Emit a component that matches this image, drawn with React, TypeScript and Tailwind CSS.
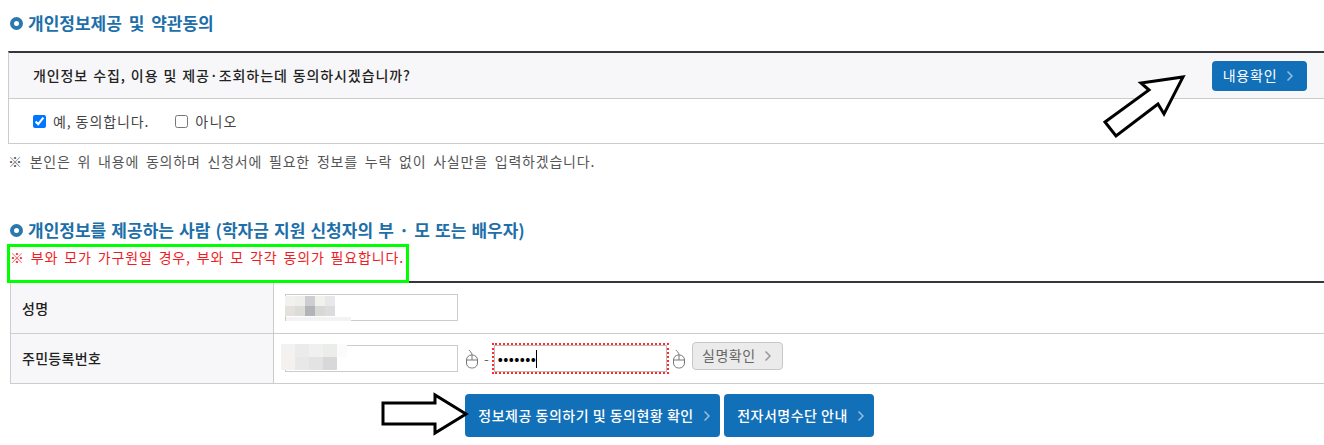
import { ChevronRight } from 'lucide-react';

const font = { fontFamily: '"Noto Sans CJK KR", "Liberation Sans", sans-serif' };

function Heading({ children, className }: { children: React.ReactNode; className: string }) {
  return (
    <h3 className={`flex items-center text-[17px] leading-[20px] font-bold text-[#1d6fa9] ${className}`}>
      <span className="mr-[5px] h-[13px] w-[13px] shrink-0 rounded-full border-4 border-[#2a78ae] bg-white" />
      {children}
    </h3>
  );
}

function BlueButton({ label, className }: { label: string; className: string }) {
  return (
    <button className={`flex items-center justify-center gap-[5px] rounded-[4px] bg-[#1170b8] text-[14px] tracking-[0.5px] text-white ${className}`}>
      {label}
      <ChevronRight size={16} strokeWidth={2.5} className="text-[#8fbde0]" />
    </button>
  );
}

function MouseIcon() {
  return (
    <svg width="14" height="20" viewBox="0 0 14 20" fill="none" stroke="#777" strokeWidth="1" className="shrink-0">
      <path d="M7 6 C7 3 5 3 4 1" />
      <rect x="1.5" y="6" width="11" height="13" rx="5" fill="#fff" />
      <path d="M1.5 11 H12.5 M7 6 V11" />
    </svg>
  );
}

// mosaic used where the personal data was blurred out in the picture
function Mosaic({ cells, cols, size, className }: { cells: string[]; cols: string; size: string; className: string }) {
  return (
    <div className={`absolute grid ${cols} ${className}`}>
      {cells.map((c, i) => (
        <div key={i} className={size} style={{ backgroundColor: c }} />
      ))}
    </div>
  );
}

export default function App() {
  return (
    <div className="relative h-[445px] w-[1324px] overflow-hidden bg-white text-[14px] text-[#444]" style={font}>
      <div className="pl-[8px]">
        <Heading className="pt-[13px] pl-[2px] [word-spacing:3px]">개인정보제공 및 약관동의</Heading>

        <div className="mt-[18px] border-t-2 border-l border-b border-t-[#35373c] border-l-[#ccc] border-b-[#ccc]">
          <div className="flex h-[46px] items-center justify-between border-b border-[#ccc] bg-[#f7f7f9] pr-[17px] pl-[24px]">
            <span className="text-[14px] font-medium tracking-[0.9px] text-[#222] [word-spacing:1px]">개인정보 수집, 이용 및 제공·조회하는데 동의하시겠습니까?</span>
            <BlueButton label="내용확인" className="h-[30px] w-[95px] pl-[2px] tracking-[0.8px]" />
          </div>
          <div className="flex h-[44px] items-center pl-[24px] tracking-[0.9px]">
            <label className="flex items-center">
              <input type="checkbox" defaultChecked className="mr-[7px] h-[13px] w-[13px] accent-[#0075ff]" />
              예, 동의합니다.
            </label>
            <label className="ml-[26px] flex items-center tracking-[1.2px]">
              <input type="checkbox" className="mr-[7px] h-[13px] w-[13px]" />
              아니오
            </label>
          </div>
        </div>

        <p className="mt-[8px] text-[14px] leading-[18px] tracking-[0.8px] text-[#555] [word-spacing:2.9px]">※ 본인은 위 내용에 동의하며 신청서에 필요한 정보를 누락 없이 사실만을 입력하겠습니다.</p>

        <Heading className="mt-[50px] pl-[2px] [word-spacing:1.3px]">개인정보를 제공하는 사람 (학자금 지원 신청자의 부 · 모 또는 배우자)</Heading>
        <p className="mt-[8px] pl-[2px] text-[14px] leading-[18px] tracking-[0.85px] text-[#f01c24] [word-spacing:2px]">※ 부와 모가 가구원일 경우, 부와 모 각각 동의가 필요합니다.</p>
      </div>

      <div className="mt-[15px] ml-[10px] border-t-2 border-t-[#35373c] border-l border-l-[#ccc]">
        <div className="flex h-[51px] border-b border-[#ccc]">
          <div className="flex w-[263px] items-center border-r border-[#ccc] bg-[#f7f7f9] pl-[11px] font-medium tracking-[0.3px] text-[#222]">성명</div>
          <div className="flex items-center pl-[11px]">
            <div className="mb-[2px] h-[27px] w-[173px] border border-[#ccc] bg-white" />
          </div>
        </div>
        <div className="flex h-[50px] border-b border-[#ccc]">
          <div className="flex w-[263px] items-center border-r border-[#ccc] bg-[#f7f7f9] pl-[11px] font-medium tracking-[0.3px] text-[#222]">주민등록번호</div>
          <div className="flex items-center pl-[11px]">
            <div className="h-[27px] w-[173px] border border-[#ccc] bg-white" />
            <span className="ml-[7px]"><MouseIcon /></span>
            <span className="mx-[5px] text-[#666]">-</span>
            <div className="flex h-[27px] w-[173px] items-center border border-[#bbb] pl-[3px] text-[#000] outline-2 outline-offset-0 outline-dotted outline-[#ff2a2a]">
              <span className="text-[15px] tracking-[0.4px]">•••••••</span>
              <span className="h-[18px] w-px bg-black" />
            </div>
            <span className="ml-[5px]"><MouseIcon /></span>
            <button className="mb-[6px] ml-[6px] flex h-[28px] w-[91px] items-center justify-center gap-[4px] rounded-[4px] border border-[#c8c8c8] bg-[#ebebeb] pl-[3px] text-[14px] tracking-[0.5px] text-[#666]">
              실명확인
              <ChevronRight size={16} strokeWidth={2.5} className="text-[#999]" />
            </button>
          </div>
        </div>
      </div>

      <div className="mt-[10px] flex gap-[4px] pl-[465px]">
        <BlueButton label="정보제공 동의하기 및 동의현황 확인" className="h-[43px] w-[255px] pl-[8px] font-medium" />
        <BlueButton label="전자서명수단 안내" className="h-[43px] w-[150px] pl-[8px] font-medium" />
      </div>

      {/* annotations drawn over the screenshot */}
      <div className="absolute top-[244px] left-[7px] h-[39px] w-[402px] border-[3px] border-[#00ff00]" />

      <svg className="absolute top-[70px] left-[1100px]" width="90" height="70" viewBox="0 0 90 70" fill="#fff" stroke="#000" strokeWidth="3">
        <path d="M5 52 L49 20 L41 13 L83 7 L64 44 L58 34 L16 66 Z" />
      </svg>
      <svg className="absolute top-[392px] left-[380px]" width="90" height="46" viewBox="0 0 90 46" fill="#fff" stroke="#000" strokeWidth="3">
        <path d="M3 11 H55 V3 L86 22 L55 41 V32 H3 Z" />
      </svg>

      <Mosaic
        className="top-[296px] left-[285px]"
        cols="grid-cols-[10px_10px_10px_10px_10px]"
        size="h-[10px]"
        cells={['#f2f1f0', '#eeefea', '#cdced2', '#f1f1ee', '#e8e7ec', '#e4e1dc', '#dcdcd8', '#b3b4b8', '#d8d9d6', '#dcdcdc']}
      />
      <div className="absolute top-[317px] left-[286px] h-[4px] w-[65px] bg-[#f3f3f3]" />
      <Mosaic
        className="top-[344px] left-[281px]"
        cols="grid-cols-[14px_14px_14px_14px_10px]"
        size="h-[13px]"
        cells={['#f3f2f0', '#ebebeb', '#f0f0f0', '#ebedeb', '#fbfbfb', '#f3f2f0', '#e8e8e8', '#e4e3e4', '#d8d8da', '#ffffff']}
      />
    </div>
  );
}
